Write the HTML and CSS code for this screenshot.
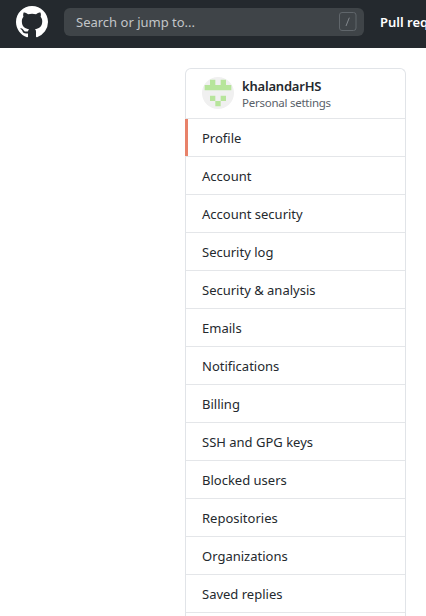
FILE: index.html
```html
<!DOCTYPE html>
<html lang="en">
<head>
<meta charset="utf-8">
<title>Your Profile</title>
<link rel="stylesheet" href="styles.css">
</head>
<body>
<header class="header">
  <svg class="logo" viewBox="0 0 16 16" width="32" height="32"><path fill="#fff" fill-rule="evenodd" d="M8 0C3.58 0 0 3.58 0 8c0 3.54 2.29 6.53 5.47 7.59.4.07.55-.17.55-.38 0-.19-.01-.82-.01-1.49-2.01.37-2.53-.49-2.69-.94-.09-.23-.48-.94-.82-1.13-.28-.15-.68-.52-.01-.53.63-.01 1.08.58 1.23.82.72 1.21 1.87.87 2.33.66.07-.52.28-.87.51-1.07-1.78-.2-3.64-.89-3.64-3.95 0-.87.31-1.59.82-2.15-.08-.2-.36-1.02.08-2.12 0 0 .67-.21 2.2.82.64-.18 1.32-.27 2-.27.68 0 1.36.09 2 .27 1.53-1.04 2.2-.82 2.2-.82.44 1.1.16 1.92.08 2.12.51.56.82 1.27.82 2.15 0 3.07-1.87 3.75-3.65 3.95.29.25.54.73.54 1.48 0 1.07-.01 1.93-.01 2.2 0 .21.15.46.55.38A8.013 8.013 0 0016 8c0-4.42-3.58-8-8-8z"/></svg>
  <div class="search">
    <span class="placeholder">Search or jump to...</span>
    <svg class="slash" width="18" height="20" viewBox="0 0 18 20" fill="none"><rect x=".5" y=".5" width="16.5" height="18" rx="2.5" stroke="#60666b"/><path d="M7 14l3.3-8.3" stroke="#83888d"/></svg>
  </div>
  <a class="link">Pull requests</a>
</header>
<nav class="menu">
  <div class="user">
    <svg class="avatar" width="32" height="32" viewBox="0 0 420 420"><circle cx="210" cy="210" r="210" fill="#f0f0f0"/><path fill="#b7e59b" d="M105 35h70v70h70V35h70v70h70v70H35v-70h70zM105 245h70v70h70v-70h70v70h-70v70h-70v-70h-70z"/></svg>
    <div class="who">
      <span class="name">khalandarHS</span>
      <span class="sub">Personal settings</span>
    </div>
  </div>
  <a class="item selected"><span>Profile</span></a>
  <a class="item"><span>Account</span></a>
  <a class="item"><span>Account security</span></a>
  <a class="item"><span>Security log</span></a>
  <a class="item"><span>Security &amp; analysis</span></a>
  <a class="item"><span>Emails</span></a>
  <a class="item"><span>Notifications</span></a>
  <a class="item"><span>Billing</span></a>
  <a class="item"><span>SSH and GPG keys</span></a>
  <a class="item"><span>Blocked users</span></a>
  <a class="item"><span>Repositories</span></a>
  <a class="item"><span>Organizations</span></a>
  <a class="item"><span>Saved replies</span></a>
</nav>
</body>
</html>
```
FILE: styles.css
```css
* { box-sizing: border-box; }
body {
  display: flex;
  flex-direction: column;
  margin: 0;
  height: 616px;
  overflow: hidden;
  background: #fff;
  color: #24292e;
  font: 13px/20px "Noto Sans", "Open Sans", sans-serif;
}
.header {
  flex: none;
  display: flex;
  align-items: center;
  height: 48px;
  padding: 0 0 4px 16px;
  background: #24292e;
  overflow: hidden;
}
.logo { flex: none; margin-right: 16px; }
.search {
  flex: none;
  display: flex;
  align-items: center;
  justify-content: space-between;
  width: 300px;
  height: 28px;
  padding: 0 7px 0 12px;
  border-radius: 6px;
  background: #3f4448;
  color: #c3c6c8;
}
.link {
  flex: none;
  margin-left: 16px;
  color: #fff;
  font-weight: 600;
}
.menu {
  flex: 1;
  width: 221px;
  margin: 20px 0 0 185px;
  border: 1px solid #e1e4e8;
  border-bottom: 0;
  border-radius: 6px 6px 0 0;
}
.user {
  display: flex;
  gap: 8px;
  height: 50px;
  padding: 8px 16px;
  border-bottom: 1px solid #e4e6e9;
}
.avatar { flex: none; }
.who { display: flex; flex-direction: column; }
.name { font-weight: 600; line-height: 18px; letter-spacing: -.2px; }
.sub { color: #586069; font-size: 11.5px; line-height: 16px; letter-spacing: -.25px; }
.item {
  display: flex;
  align-items: center;
  height: 38px;
  padding-left: 16px;
  border-bottom: 1px solid #e4e6e9;
}
.selected {
  margin-left: -1px;
  padding-left: 17px;
  background: linear-gradient(#e8826a, #e8826a) left / 3px 100% no-repeat;
}
```
